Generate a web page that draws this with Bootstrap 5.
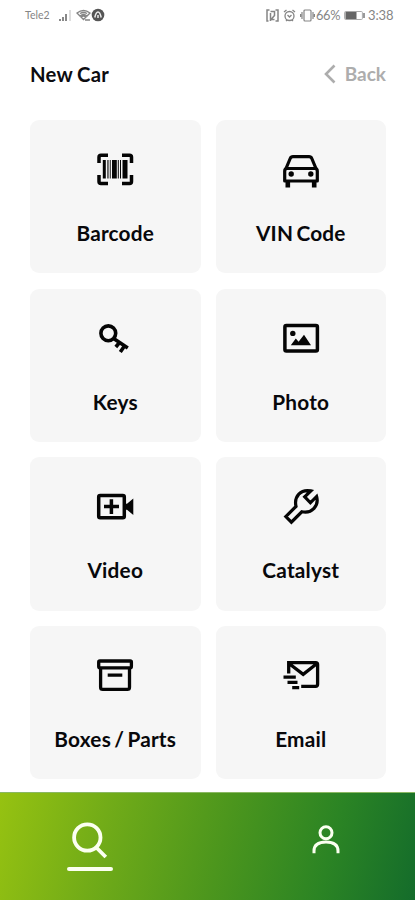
<!DOCTYPE html>
<html lang="en">
<head>
<meta charset="utf-8">
<meta name="viewport" content="width=device-width, initial-scale=1">
<title>New Car</title>
<link href="https://cdn.jsdelivr.net/npm/bootstrap@5.3.0/dist/css/bootstrap.min.css" rel="stylesheet">
<style>
body{font-family:Lato,sans-serif;color:#0c0c10;height:900px;overflow:hidden;background:#fff}
svg{display:block;fill:none;stroke:currentColor;flex:none}
.status{height:30px;padding:0 22px 0 25px;font-size:11px;color:#858585;line-height:30px}
.status .carrier{font-size:10.5px;width:33px}
.status .pct{font-size:12.8px;margin-left:1px;width:28px;letter-spacing:-.3px}
.status .clock{font-size:13px;width:25px;margin-left:3px;letter-spacing:-.1px}
.topbar{height:90px;padding:0 29px 2px 30px}
.topbar h1{font-size:20.3px;font-weight:700;line-height:24px;letter-spacing:.2px;word-spacing:-.5px}
.back{font-size:19px;line-height:24px;font-weight:700;color:#adadad;gap:9px}
.tiles{display:grid;grid-template-columns:170.5px 170.5px;grid-auto-rows:153.4px;gap:15.3px 15px;padding-left:30px}
.tile{background:#f6f6f6;border-radius:9px;color:#08080b;padding-top:30px}
.tile span{font-size:20.8px;font-weight:700;line-height:26px;margin-top:30px;white-space:nowrap;letter-spacing:.2px;word-spacing:-2px}
.tile svg{color:#050505}
.dock{height:108px;background:linear-gradient(104deg,#96c211 0%,#72ac18 25%,#4c961d 53%,#2b8424 78%,#146c2b 100%);border-top:1px solid #8ab862}
.dock a{color:#fbfff0}
.find{width:46px;margin-left:67px;padding-top:28px}
.find i{height:4px;width:46px;border-radius:2px;background:#fbfff0;margin-top:8px}
.me{margin-right:74px;padding-top:31px}
</style>
</head>
<body class="d-flex flex-column">
<div class="status d-flex align-items-center">
  <span class="carrier">Tele2</span>
  <svg width="14" height="13" viewBox="0 0 14 13" stroke-width="2"><path stroke="#888" d="M2 12v-2M5 12V8M8 12V5"/><path stroke="#ddd" d="M12 12V1"/></svg>
  <svg class="ms-1" width="15" height="13" viewBox="0 0 15 13" stroke="#777" stroke-width="1.300"><path d="M1 4q6.500-5 13 0L11 7Q7.500 4 4 7ZM4 4.500q3.500-2 7 0M5 8q2.500-2 5 0l-2.500 2.500ZM9 11h5"/></svg>
  <svg class="ms-0" width="14" height="14" viewBox="0 0 14 14"><circle cx="7" cy="7" r="6.300" fill="#555" stroke="none"/><path stroke="#eee" stroke-width="1.500" d="M3.800 9.500q1.200-5.500 3.200-5.500t3.200 5.500M7 7v3"/></svg>
  <svg class="ms-auto" width="13" height="13" viewBox="0 0 13 13" stroke="#555" stroke-width="1.500"><path d="M3.500 1H1v11h1.500M9.500 1H12v11h-2.500M4.500 12V4M4.500 2.500h4v4l-3.500 4h3.500"/></svg>
  <svg class="ms-1" width="13" height="13" viewBox="0 0 13 13" stroke="#777" stroke-width="1.300"><circle cx="6.500" cy="7" r="4.500"/><path d="M1 3l2.500-2M12 3L9.500 1M4.500 6l2 2 2-2M3 12l1-1M10 12l-1-1"/></svg>
  <svg class="ms-1" width="15" height="13" viewBox="0 0 15 13" stroke="#777" stroke-width="1.200"><rect x="4" y="1" width="7" height="11" rx="1"/><path d="M2 3v7M13 3v7M.6 5v3M14.400 5v3"/></svg>
  <span class="pct">66%</span>
  <svg width="21" height="11" viewBox="0 0 21 11"><rect x=".6" y="1.500" width="17.800" height="8" rx="1" stroke="#aaa"/><rect x="1.500" y="2" width="11" height="7" fill="#666" stroke="none"/><path d="M20 3v5" stroke="#777" stroke-width="1.500"/></svg>
  <span class="clock">3:38</span>
</div>
<header class="topbar d-flex justify-content-between align-items-center">
  <h1 class="m-0">New Car</h1>
  <a href="#" class="back d-flex align-items-center text-decoration-none">
    <svg width="12" height="20" viewBox="0 0 12 20" stroke-width="2.600"><path d="M10.500 1.500L2 10l8.500 8.500"/></svg>Back</a>
</header>
<main class="tiles">
  <a href="#" class="tile d-flex flex-column align-items-center text-decoration-none">
    <svg width="40" height="40" viewBox="0 0 40 40" stroke-width="3.500"><path d="M13 5.200H6Q4 5.200 4 7.200V13M27 5.200h7.500q2 0 2 2V13M13 33.500H6q-2 0-2-2V25M27 33.500h7.500q2 0 2-2V25"/><path fill="currentColor" stroke="none" d="M7.800 10h3v18.500h-3zM12.400 10h1.100v18.500h-1.100zM14.800 10h.9v18.500h-.9zM17 10h4.800v18.500H17zM22.800 10h1v18.500h-1zM25 10h1v18.500h-1zM27.500 10h5v18.500h-5z"/></svg>
    <span>Barcode</span></a>
  <a href="#" class="tile d-flex flex-column align-items-center text-decoration-none">
    <svg width="40" height="40" viewBox="0 0 40 40" stroke-width="3.200" stroke-linejoin="round"><path d="M5 18.500L9.200 8.500Q10 6.600 12 6.600h16q2 0 2.800 1.900L35 18.500"/><path d="M3.700 31V21q0-2.500 2.500-2.500h27.600q2.500 0 2.500 2.500v10Z"/><path stroke-width="4.600" stroke-linecap="butt" d="M6.800 31v6.400M33.200 31v6.400"/><circle cx="10.200" cy="24" r="2.700" fill="currentColor" stroke="none"/><circle cx="29.800" cy="24" r="2.700" fill="currentColor" stroke="none"/></svg>
    <span>VIN Code</span></a>
  <a href="#" class="tile d-flex flex-column align-items-center text-decoration-none">
    <svg width="40" height="40" viewBox="0 0 40 40" stroke-width="3.600"><circle cx="13.300" cy="14.300" r="7.400"/><path d="M18.600 19.500L32.800 29M24.500 23.500L20.800 28M29.500 27L25.300 33"/></svg>
    <span>Keys</span></a>
  <a href="#" class="tile d-flex flex-column align-items-center text-decoration-none">
    <svg width="40" height="40" viewBox="0 0 40 40" stroke-width="3.500"><rect x="3.900" y="6.600" width="32.500" height="25.300" rx="1.500"/><path fill="currentColor" stroke="none" d="M9.800 26.300L14.800 19.600 17.600 22.800 23 15.800 30 26.300Z"/><circle cx="11.800" cy="14.400" r="2.700" fill="currentColor" stroke="none"/></svg>
    <span>Photo</span></a>
  <a href="#" class="tile d-flex flex-column align-items-center text-decoration-none">
    <svg width="40" height="40" viewBox="0 0 40 40" stroke-width="3.500"><rect x="3.700" y="8.500" width="25.600" height="22.200" rx="1.500"/><path d="M9 19.600h15M16.400 12.200v14.800"/><path fill="currentColor" stroke="none" d="M30 16.700h2l6.300-5.300v16.600L32 22.700h-2z"/></svg>
    <span>Video</span></a>
  <a href="#" class="tile d-flex flex-column align-items-center text-decoration-none">
    <svg width="40" height="40" viewBox="0 0 40 40" stroke-width="3.200" stroke-linejoin="miter"><path d="M4.800 29.600L15 19.400C12.800 9.600 19.800 1.800 29.800 3.900L23.700 9.800 29.400 15.800 35.600 9.500C38.200 18.800 31 27 20.800 24.800L10.400 35.200Z"/></svg>
    <span>Catalyst</span></a>
  <a href="#" class="tile d-flex flex-column align-items-center text-decoration-none">
    <svg width="40" height="40" viewBox="0 0 40 40" stroke-width="3.300"><rect x="3.700" y="5" width="32.700" height="6.800" rx="1.200"/><path d="M5.600 12v19.200q0 2.200 2.200 2.200h24.500q2.200 0 2.200-2.200V12M12.700 19.200h14.600"/></svg>
    <span>Boxes / Parts</span></a>
  <a href="#" class="tile d-flex flex-column align-items-center text-decoration-none">
    <svg width="40" height="40" viewBox="0 0 40 40" stroke-width="3.300"><path d="M7.700 17.500V6.700h27q1.900 0 1.900 1.900v19.700q0 2-2 2H20.200M8 7.500L22.200 18.300 36 7.500M2.500 21.200h12.300M6.500 26.400h10M11.200 31.700h7"/></svg>
    <span>Email</span></a>
</main>
<nav class="dock mt-auto d-flex justify-content-between">
  <a href="#" class="find d-flex flex-column align-items-center" aria-label="Search">
    <svg width="38" height="38" viewBox="0 0 38 38" stroke-width="3.800"><circle cx="16.300" cy="16.500" r="13.200"/><path d="M25.300 26.500l9.500 9.500"/></svg>
    <i class="d-block"></i></a>
  <a href="#" class="me" aria-label="Profile">
    <svg width="30" height="32" viewBox="0 0 30 32" stroke-width="3"><circle cx="15" cy="8.800" r="6"/><path d="M3 29.300V27q0-9 12-9t12 9v2.300"/></svg></a>
</nav>
<script src="https://cdn.jsdelivr.net/npm/bootstrap@5.3.0/dist/js/bootstrap.bundle.min.js"></script>
</body>
</html>
